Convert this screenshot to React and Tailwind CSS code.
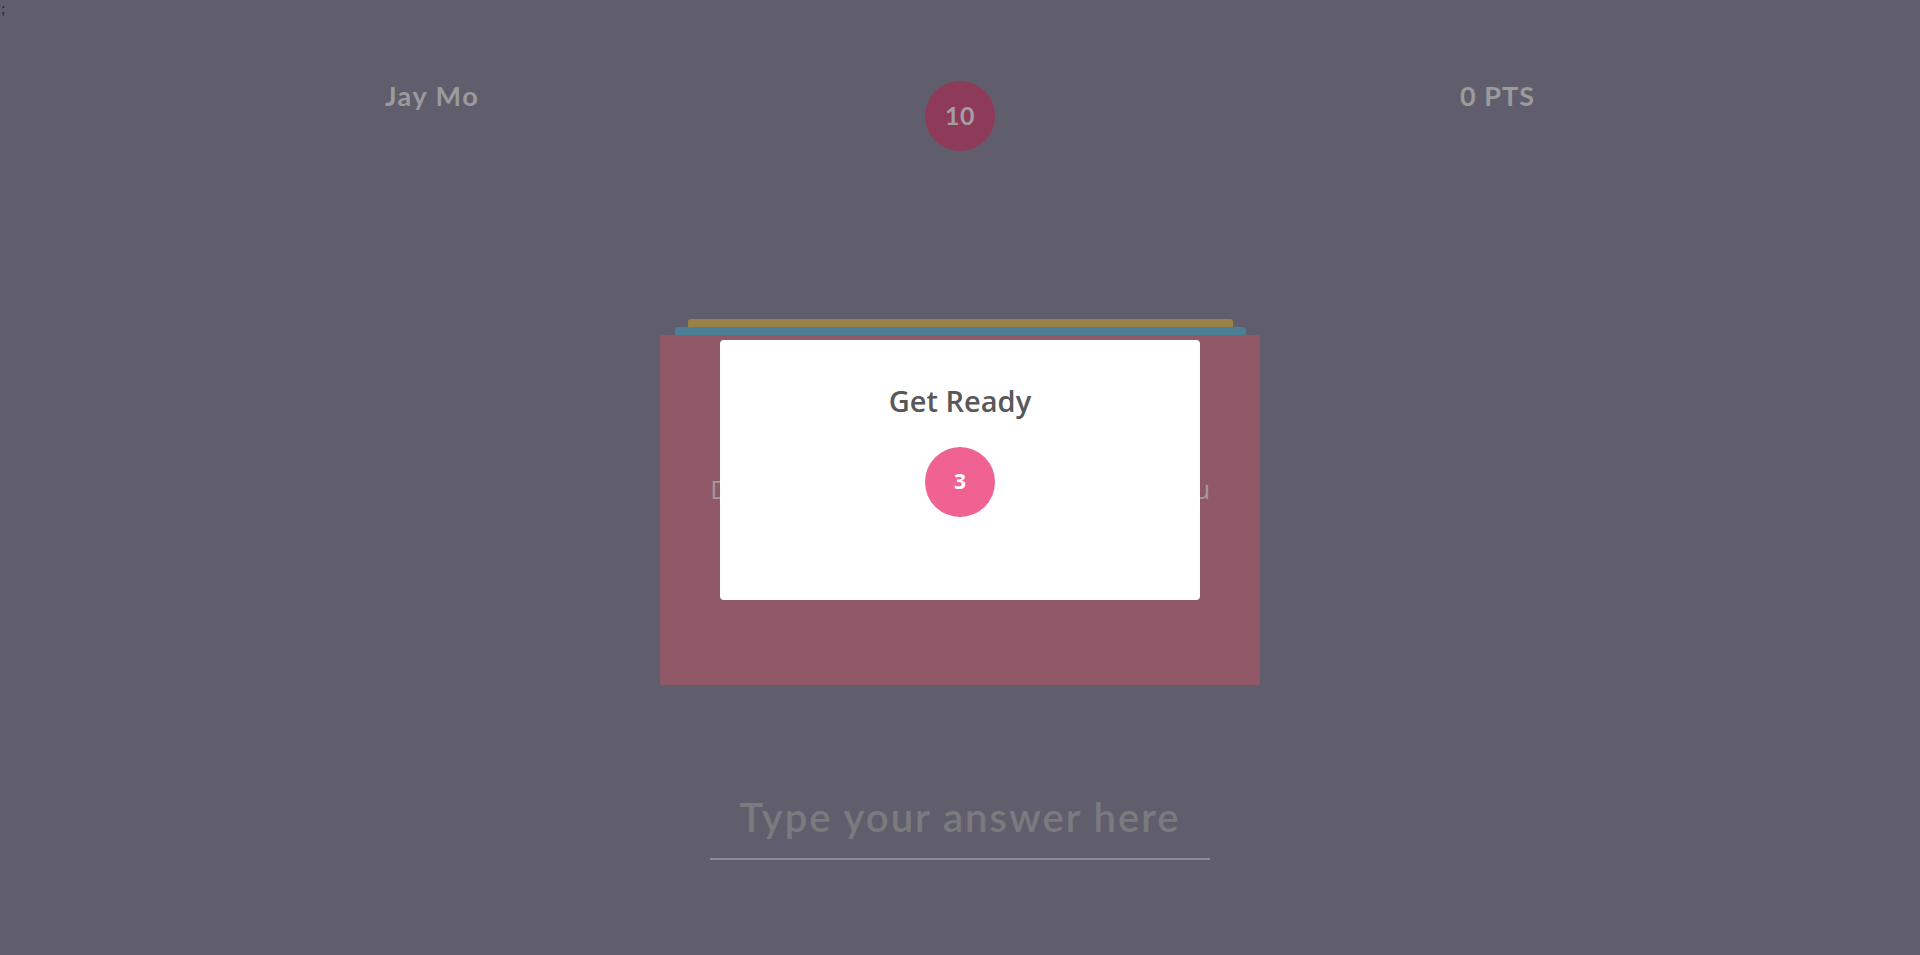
import React, { useState } from 'react';

const App = () => {
  const [answer, setAnswer] = useState('');

  return (
    <div className="relative min-h-[955px] bg-[#605e6c] overflow-hidden font-['Lato',sans-serif]">
      <div className="h-[18px] pl-[1px] text-[16px] leading-[18px] text-[#2b2a35] font-['Liberation_Serif',serif]">;</div>

      <div className="mx-auto mt-[63px] flex w-[1150px] items-start justify-between">
        <div className="w-[200px] text-[27px] font-bold leading-[30px] tracking-[1.5px] text-[#9b9a9c]">Jay Mo</div>
        <div className="flex h-[70px] w-[70px] items-center justify-center rounded-full bg-[#8e3a59] text-[25px] font-bold tracking-[0.5px] text-[#a39fa6]">
          10
        </div>
        <div className="w-[200px] text-right text-[27px] font-bold leading-[30px] tracking-[1px] text-[#9b9a9c]">0 PTS</div>
      </div>

      <div className="mt-[168px] flex flex-col items-center">
        <div className="h-[8px] w-[545px] rounded-t-[3px] bg-[#9a8148]" />
        <div className="h-[8px] w-[571px] rounded-t-[3px] bg-[#4b7f96]" />
        <div className="flex h-[350px] w-[600px] items-center justify-center rounded-[3px] bg-[#915868] px-[20px] pb-[42px]">
          <p className="whitespace-nowrap text-center text-[26px] tracking-[-0.4px] text-[#9e9a9f] font-['Open_Sans',sans-serif]">
            Describe a thing that will always follow you
          </p>
        </div>
      </div>

      <div className="mt-[108px] flex justify-center">
        <input
          value={answer}
          onChange={(e) => setAnswer(e.target.value)}
          placeholder="Type your answer here"
          className="block h-[67px] w-[500px] border-b-2 border-[#8e8d91] bg-transparent pb-[17px] text-center text-[40px] font-semibold leading-[48px] tracking-[2px] text-[#7b7a7e] outline-none placeholder:text-[#7b7a7e]"
        />
      </div>

      <div className="absolute inset-0 flex justify-center pt-[340px]">
        <div className="flex h-[260px] w-[480px] flex-col items-center rounded-[4px] bg-white pt-[41px] font-['Open_Sans',sans-serif]">
          <h2 className="text-[29px] font-semibold leading-[40px] text-[#58575a]">Get Ready</h2>
          <div className="mt-[26px] flex h-[70px] w-[70px] items-center justify-center rounded-full bg-[#f06292] text-[21px] font-bold text-white">
            3
          </div>
        </div>
      </div>
    </div>
  );
};

export default App;
